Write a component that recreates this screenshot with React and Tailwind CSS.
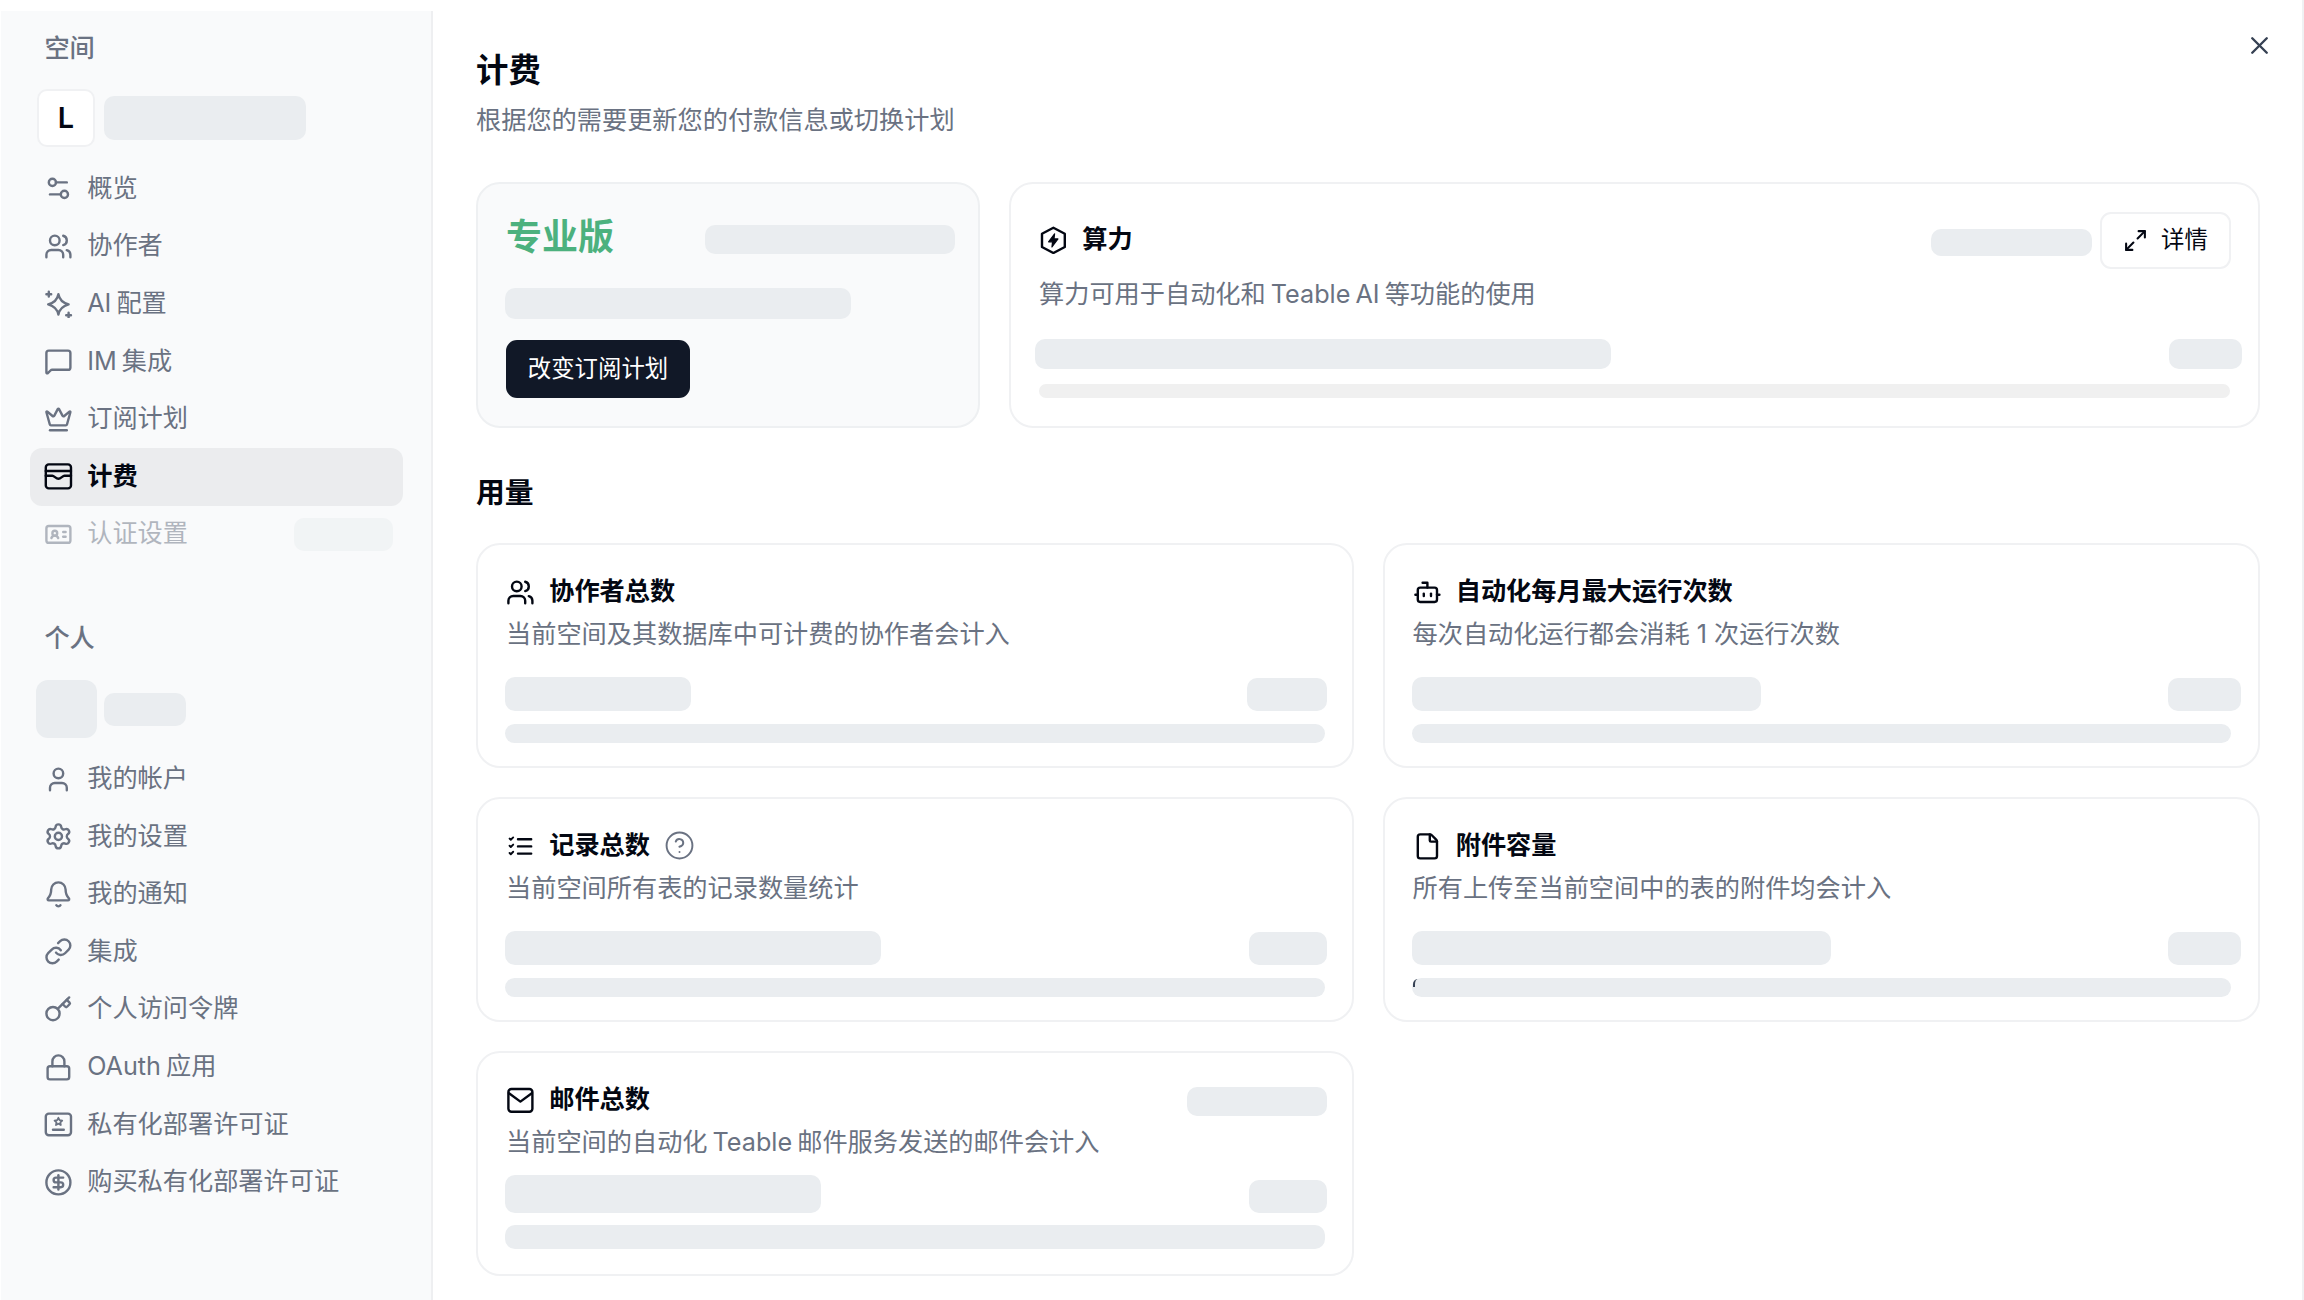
import { Settings2, Users, MessageSquare, Crown, IdCard, User, Settings, Bell, Link, Key, Lock, CircleDollarSign, X, Maximize2, CircleHelp, Bot, File } from 'lucide-react'

const FONT = "font-['Inter','Noto_Sans_CJK_SC',sans-serif]"

const AiIcon = ({ className }) => (
  <svg viewBox="0 0 24 24" fill="none" stroke="currentColor" strokeWidth="2" strokeLinecap="round" strokeLinejoin="round" className={className}>
    <path d="M12 3.500c.8 4.400 3.200 7 8.500 8.500-5.300 1.500-7.700 4.100-8.500 8.500-.8-4.400-3.200-7-8.500-8.500 5.300-1.500 7.700-4.100 8.500-8.500z" />
    <path d="M4 1.500v4M2 3.500h4M20.500 19v4M18.500 21h4" />
  </svg>
)

const BillingIcon = ({ className }) => (
  <svg viewBox="0 0 24 24" fill="none" stroke="currentColor" strokeWidth="2" strokeLinecap="round" strokeLinejoin="round" className={className}>
    <rect x="1.500" y="2" width="21" height="20" rx="2.500" />
    <path d="M1.500 7.500h21M1.500 11.500h5.500c1.500 0 3 2.500 5 2.500s3.500-2.500 5-2.500h5.500" />
  </svg>
)

const LicenseIcon = ({ className }) => (
  <svg viewBox="0 0 24 24" fill="none" stroke="currentColor" strokeWidth="2" strokeLinecap="round" strokeLinejoin="round" className={className}>
    <rect x="1.500" y="3" width="21" height="18" rx="2.500" />
    <path strokeWidth="1.500" d="m12 6.500 1 2 2.200.3-1.600 1.550.4 2.150-2-1.050-2 1.050.4-2.150-1.600-1.550 2.200-.3z" />
    <path d="M7.500 16.500h9" />
  </svg>
)

const PowerIcon = ({ className }) => (
  <svg viewBox="0 0 24 24" fill="none" stroke="currentColor" strokeWidth="2" strokeLinecap="round" strokeLinejoin="round" className={className}>
    <path d="M12 1.500 21.500 6.500v11L12 22.500 2.500 17.500v-11z" />
    <path fill="currentColor" strokeWidth="1" d="M13 6.500 8 13.200h3.300l-.5 4.300 5-6.700h-3.300z" />
  </svg>
)

const RecordsIcon = ({ className }) => (
  <svg viewBox="0 0 24 24" fill="none" stroke="currentColor" strokeWidth="2" strokeLinecap="round" strokeLinejoin="round" className={className}>
    <path d="M10 6h11M10 12h11M10 18h11" />
    <path strokeWidth="1.600" d="m3 5.500 1 1 2-2M3 11.500l1 1 2-2M3 17.500l1 1 2-2" />
  </svg>
)

const MailIcon = ({ className }) => (
  <svg viewBox="0 0 24 24" fill="none" stroke="currentColor" strokeWidth="2" strokeLinecap="round" strokeLinejoin="round" className={className}>
    <rect x="2" y="2.500" width="20" height="19" rx="2.500" />
    <path d="M2.500 6 12 13l9.500-7" />
  </svg>
)

const SPACE_ITEMS = [
  { icon: Settings2, label: '概览' },
  { icon: Users, label: '协作者' },
  { icon: AiIcon, label: 'AI 配置' },
  { icon: MessageSquare, label: 'IM 集成' },
  { icon: Crown, label: '订阅计划' },
  { icon: BillingIcon, label: '计费', active: true },
  { icon: IdCard, label: '认证设置', disabled: true },
]

const PERSONAL_ITEMS = [
  { icon: User, label: '我的帐户' },
  { icon: Settings, label: '我的设置' },
  { icon: Bell, label: '我的通知' },
  { icon: Link, label: '集成' },
  { icon: Key, label: '个人访问令牌' },
  { icon: Lock, label: 'OAuth 应用' },
  { icon: LicenseIcon, label: '私有化部署许可证' },
  { icon: CircleDollarSign, label: '购买私有化部署许可证' },
]

const USAGE_CARDS = [
  { icon: Users, title: '协作者总数', desc: '当前空间及其数据库中可计费的协作者会计入', skel: 'w-[186px]', right: 'w-[80px] h-[33px] -mr-[2px]' },
  { icon: Bot, title: '自动化每月最大运行次数', desc: '每次自动化运行都会消耗 1 次运行次数', descClass: '[word-spacing:0]', skel: 'w-[349px]', right: 'w-[73px] h-[33px] -mr-[10px]' },
  { icon: RecordsIcon, title: '记录总数', help: true, desc: '当前空间所有表的记录数量统计', skel: 'w-[376px]', right: 'w-[78px] h-[33px] -mr-[2px]' },
  { icon: File, title: '附件容量', desc: '所有上传至当前空间中的表的附件均会计入', skel: 'w-[419px]', right: 'w-[73px] h-[33px] -mr-[10px]', tick: true },
  { icon: MailIcon, title: '邮件总数', headerSkel: true, desc: '当前空间的自动化 Teable 邮件服务发送的邮件会计入', skel: 'w-[316px]', right: 'w-[78px] h-[33px] -mr-[2px]', row: 'mt-[15px] h-[38px]', bar: 'mt-[12px] h-[24px]' },
]

function Skeleton({ className }) {
  return <div className={`bg-[#eaedf0] rounded-[10px] ${className}`} />
}

function NavItem({ icon: Icon, label, active, disabled }) {
  return (
    <div className={`flex items-center gap-[14px] h-[57.6px] pl-[14.4px] pr-[10px] rounded-[12px] text-[25.2px] ${active ? 'bg-[#ebecee] text-gray-950 font-semibold' : 'text-gray-500'} ${disabled ? 'opacity-50' : ''}`}>
      <Icon className="w-[28.8px] h-[28.8px] shrink-0" />
      <span className="flex-1">{label}</span>
      {disabled && <Skeleton className="w-[99px] h-[33px] bg-[#e4e7eb]" />}
    </div>
  )
}

function UsageCard({ icon: Icon, title, desc, descClass = '', help, headerSkel, tick, skel, right, row = 'mt-[25px] h-[34px]', bar = 'mt-[13px] h-[19px]' }) {
  return (
    <div className="h-[225px] rounded-[24px] border-2 border-[#f0f1f3] bg-white px-[27px] pt-[28px]">
      <div className="flex items-center justify-between h-[38px] pl-[1px]">
        <div className="flex items-center gap-[14.4px] text-[25.2px] font-semibold text-gray-950">
          <Icon className="w-[28.8px] h-[28.8px]" />
          <span>{title}</span>
          {help && <CircleHelp className="w-[31px] h-[31px] text-gray-500" strokeWidth={1.5} />}
        </div>
        {headerSkel && <Skeleton className="w-[140px] h-[29px] -mr-[2px] mt-[2px]" />}
      </div>
      <p className={`mt-[5px] pl-[1px] text-[25.2px] leading-[36px] text-gray-500 ${descClass}`}>{desc}</p>
      <div className={`flex items-end justify-between ${row}`}>
        <Skeleton className={`h-full ${skel}`} />
        <Skeleton className={right} />
      </div>
      <div className={`relative ${bar}`}>
        <Skeleton className="h-full" />
        {tick && <div className="absolute left-[1px] top-[1px] h-[8px] w-[5px] rounded-tl-[8px] border-l-2 border-gray-700" />}
      </div>
    </div>
  )
}

export default function App() {
  return (
    <div className={`relative flex h-[1300px] overflow-hidden bg-white [word-spacing:-2px] ${FONT}`}>
      {/* sidebar */}
      <aside className="w-[432px] shrink-0 mt-[11px] ml-[1px] pl-[29px] pr-[28px] pt-[19px] bg-[#f9fafb] border-r-2 border-[#eeeff1]">
        <h3 className="h-[36px] leading-[36px] pl-[14.4px] text-[25.2px] font-medium text-gray-500">空间</h3>
        <div className="flex items-center gap-[9px] mt-[23px] ml-[7px]">
          <div className="flex items-center justify-center w-[58px] h-[58px] rounded-[10px] border-2 border-[#f0f1f3] bg-white text-[28.8px] font-semibold text-gray-950">L</div>
          <Skeleton className="w-[202px] h-[44px]" />
        </div>
        <nav className="mt-[13px]">
          {SPACE_ITEMS.map(item => <NavItem key={item.label} {...item} />)}
        </nav>
        <h3 className="mt-[57px] h-[36px] leading-[36px] pl-[14.4px] text-[25.2px] font-medium text-gray-500">个人</h3>
        <div className="flex items-center gap-[7px] mt-[24px] ml-[6px]">
          <Skeleton className="w-[61px] h-[58px] rounded-[12px]" />
          <Skeleton className="w-[82px] h-[33px]" />
        </div>
        <nav className="mt-[12px]">
          {PERSONAL_ITEMS.map(item => <NavItem key={item.label} {...item} />)}
        </nav>
      </aside>

      {/* main */}
      <main className="flex-1 pl-[43px] pr-[42px] pt-[49px] border-r-2 border-[#f0f1f3]">
        <h2 className="h-[44px] leading-[44px] text-[32.4px] font-semibold text-gray-950">计费</h2>
        <p className="mt-[9px] text-[25.2px] leading-[36px] text-gray-500">根据您的需要更新您的付款信息或切换计划</p>

        <div className="flex gap-[29px] mt-[44px]">
          <div className="w-[504px] h-[246px] rounded-[24px] border-2 border-[#eef0f2] bg-[#f9fafb] pl-[27px] pr-[23px] pt-[28px]">
            <div className="flex items-center justify-between h-[50px] pl-[1px]">
              <span className="text-[36px] font-semibold text-[#4cb17e]">专业版</span>
              <Skeleton className="w-[250px] h-[29px] mt-[4px]" />
            </div>
            <Skeleton className="mt-[26px] w-[346px] h-[31px]" />
            <button className="mt-[21px] ml-[1px] h-[58px] w-[184px] rounded-[11px] bg-[#111827] text-[23.4px] text-white">改变订阅计划</button>
          </div>

          <div className="flex-1 h-[246px] rounded-[24px] border-2 border-[#f0f1f3] bg-white px-[28px] pt-[27px]">
            <div className="flex items-center h-[58px]">
              <PowerIcon className="w-[28.8px] h-[28.8px] text-gray-950" />
              <span className="ml-[14.4px] text-[25.2px] font-semibold text-gray-950">算力</span>
              <Skeleton className="ml-auto w-[161px] h-[27px] mt-[4px]" />
              <button className="flex items-center justify-center gap-[13px] ml-[8px] -mr-[1px] w-[131px] h-[57px] rounded-[11px] border-2 border-[#f0f1f3] bg-white text-[23.4px] text-gray-950">
                <Maximize2 className="w-[25px] h-[25px]" />
                详情
              </button>
            </div>
            <p className="mt-[7px] text-[25.2px] leading-[36px] text-gray-500">算力可用于自动化和 Teable AI 等功能的使用</p>
            <div className="flex items-center justify-between mt-[27px] h-[30px] -ml-[4px] -mr-[12px]">
              <Skeleton className="w-[576px] h-full" />
              <Skeleton className="w-[73px] h-full" />
            </div>
            <div className="mt-[15px] h-[14px] rounded-[8px] bg-[#f0f0f0]" />
          </div>
        </div>

        <h3 className="mt-[45px] h-[40px] leading-[40px] text-[28.8px] font-semibold text-gray-950">用量</h3>

        <div className="grid grid-cols-2 gap-x-[29px] gap-y-[29px] mt-[30px]">
          {USAGE_CARDS.map(card => <UsageCard key={card.title} {...card} />)}
        </div>
      </main>

      <X className="absolute top-[31px] left-[2245px] w-[29px] h-[29px] text-gray-700" />
    </div>
  )
}
